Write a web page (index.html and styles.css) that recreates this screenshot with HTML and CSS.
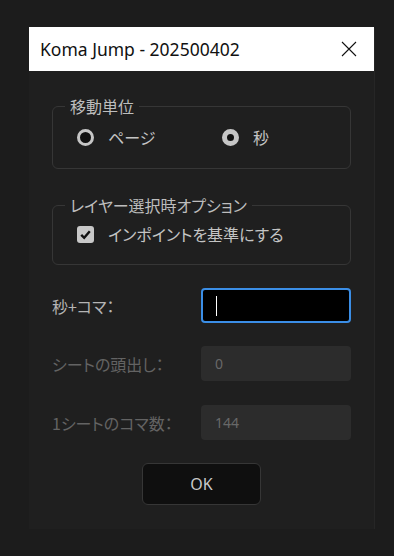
FILE: index.html
```html
<!DOCTYPE html>
<html lang="ja">
<head>
<meta name="viewport" content="width=device-width, initial-scale=1.0">
  <meta charset="UTF-8">
  <title>Koma Jump</title>
  <link rel="stylesheet" href="styles.css">
</head>
<body>
  <div class="window">
    <div class="titlebar">
      <span class="title">Koma Jump - 202500402</span>
      <svg class="close" width="16" height="16" viewBox="0 0 16 16">
        <path d="M1 1 L15 15 M15 1 L1 15" stroke="#111" stroke-width="1.1" fill="none"/>
      </svg>
    </div>

    <div class="content">
      <fieldset class="group">
        <legend>移動単位</legend>
        <div class="options">
          <label class="option option-page"><span class="radio"></span>ページ</label>
          <label class="option"><span class="radio checked"></span>秒</label>
        </div>
      </fieldset>

      <fieldset class="group group-layer">
        <legend>レイヤー選択時オプション</legend>
        <div class="options">
          <label class="option">
            <span class="checkbox">
              <svg width="17" height="17" viewBox="0 0 17 17">
                <path d="M4.2 8.8 L7.2 11.8 L12.8 5.2" stroke="#111" stroke-width="2.4" fill="none"/>
              </svg>
            </span>インポイントを基準にする
          </label>
        </div>
      </fieldset>

      <div class="field">
        <span class="field-label">秒+コマ：</span>
        <div class="input active"><span class="caret"></span></div>
      </div>
      <div class="field disabled">
        <span class="field-label">シートの頭出し：</span>
        <div class="input">0</div>
      </div>
      <div class="field disabled field-last">
        <span class="field-label">1シートのコマ数：</span>
        <div class="input">144</div>
      </div>

      <div class="actions">
        <button class="ok">OK</button>
      </div>
    </div>
  </div>
</body>
</html>
```

FILE: styles.css
```css
body {
  margin: 0;
  background: #1c1c1c;
  font-family: "Noto Sans CJK JP", "Noto Sans", sans-serif;
  font-feature-settings: "palt";
  color: #c4c4c4;
}

.window {
  margin: 27px 0 0 29px;
  width: 345px;
  height: 502px;
  background: #1f1f1f;
  box-shadow: 1px 1px 0 #262626;
}

.titlebar {
  height: 44px;
  background: #fff;
  display: flex;
  align-items: center;
  justify-content: space-between;
  padding: 0 17px 0 11px;
}

.title {
  font-family: "Noto Sans", sans-serif;
  font-size: 17.5px;
  color: #111;
}

.content {
  padding: 24px 23px 0 23px;
}

.group {
  margin: 0;
  border: 1px solid #363636;
  border-radius: 6px;
  padding: 9px 0 20px 24px;
}

.group legend {
  margin-left: -12px;
  padding: 0 5px;
  font-size: 16px;
  line-height: 22px;
  color: #bdbdbd;
}

.group-layer {
  margin-top: 25px;
  padding-top: 7px;
  padding-bottom: 19px;
}

.options {
  display: flex;
  align-items: center;
  height: 22px;
}

.option {
  display: flex;
  align-items: center;
  gap: 14px;
  font-size: 16px;
  color: #c4c4c4;
}

.option-page {
  width: 145px;
}

.radio {
  width: 11px;
  height: 11px;
  border: 3px solid #c6c6c6;
  border-radius: 50%;
  background: #111;
}

.radio.checked {
  background: #111;
  border: 5px solid #c6c6c6;
  width: 7px;
  height: 7px;
}

.checkbox {
  width: 17px;
  height: 17px;
  border-radius: 3px;
  background: #c8c8c8;
  display: flex;
}

.field {
  display: flex;
  align-items: center;
  justify-content: space-between;
  margin-top: 23px;
  font-size: 16px;
  color: #b4b4b4;
}

.field-last {
  margin-top: 24px;
}

.input {
  width: 150px;
  height: 35px;
  box-sizing: border-box;
  border-radius: 4px;
  background: #2c2c2c;
  color: #686868;
  font-family: "Noto Sans", sans-serif;
  font-size: 14px;
  padding-left: 14px;
  display: flex;
  align-items: center;
}

.input.active {
  background: #000;
  border: 2px solid #3b8ee6;
  padding-left: 13px;
}

.caret {
  width: 1px;
  height: 20px;
  background: #fff;
}

.disabled {
  color: #636363;
}

.actions {
  display: flex;
  justify-content: center;
  margin-top: 23px;
}

.ok {
  width: 119px;
  height: 42px;
  background: #0f0f0f;
  border: 1px solid #363636;
  border-radius: 6px;
  color: #c8c8c8;
  font-family: "Noto Sans", sans-serif;
  font-size: 16px;
}
```
